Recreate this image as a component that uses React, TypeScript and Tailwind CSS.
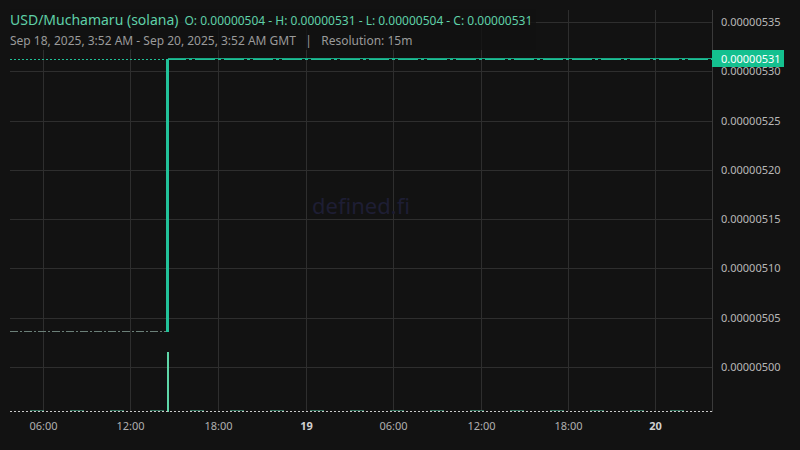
export default function App() {
  const prices = ["535", "530", "525", "520", "515", "510", "505", "500"];
  const ys = [22, 71, 121, 170, 219, 268, 318, 367];
  const xs = [43, 130, 218, 306, 393, 481, 568, 655];
  const times = ["06:00", "12:00", "18:00", "19", "06:00", "12:00", "18:00", "20"];
  return (
    <div className="relative w-[800px] h-[450px] bg-[#121212] overflow-hidden" style={{ fontFamily: "'Noto Sans', sans-serif" }}>
      <svg width="800" height="450" className="absolute inset-0">
        {ys.map((y) => (
          <line key={y} x1="10" x2="712" y1={y + 0.5} y2={y + 0.5} stroke="#2e2e2e" />
        ))}
        {xs.map((x) => (
          <line key={x} x1={x + 0.5} x2={x + 0.5} y1="10" y2="411" stroke="#2e2e2e" />
        ))}
        <line x1="712.5" x2="712.5" y1="10" y2="412" stroke="#3a3a3a" />
        <text x="361" y="214" textAnchor="middle" fill="#1e1e34" fontSize="22" fontFamily="Noto Sans, sans-serif">defined.fi</text>
        <line x1="10" x2="166" y1="59.5" y2="59.5" stroke="#1fbf95" strokeDasharray="2 2" />
        <line x1="166" x2="712" y1="59.5" y2="59.5" stroke="#1fbf95" strokeDasharray="20 3 3 3" />
        <line x1="168" x2="712" y1="58.5" y2="58.5" stroke="#17a885" />
        <line x1="10" x2="167" y1="331.5" y2="331.5" stroke="#6b7f78" strokeDasharray="8 2 2 2" />
        <rect x="166" y="59" width="3" height="273" fill="#22c29a" />
        <rect x="167" y="352" width="2" height="60" fill="#5fd6a8" />
        <line x1="10" x2="712" y1="411.5" y2="411.5" stroke="#c8c8c8" strokeDasharray="2 2" />
        <line x1="30" x2="700" y1="410.5" y2="410.5" stroke="#4fc7a0" strokeOpacity="0.5" strokeDasharray="14 26" />
        {ys.map((y, i) => (
          <text key={i} x="721" y={y + 4} fill="#b8b8b8" fontSize="11" fontFamily="Noto Sans, sans-serif">0.00000{prices[i]}</text>
        ))}
        <rect x="712" y="50" width="72" height="17" fill="#14c08f" />
        <text x="721" y="63" fill="#ffffff" fontSize="11" fontFamily="Noto Sans, sans-serif">0.00000531</text>
        {xs.map((x, i) => (
          <text key={i} x={x + 0.5} y="430" textAnchor="middle" fill={i === 3 || i === 7 ? "#d0d0d0" : "#b0b0b0"} fontWeight={i === 3 || i === 7 ? 700 : 400} fontSize="11" fontFamily="Noto Sans, sans-serif">{times[i]}</text>
        ))}
      </svg>
      <div className="absolute left-[10px] top-[9px] flex flex-col gap-[2px] bg-[#121212]/80 pr-1">
        <div className="flex items-baseline gap-[6px] text-[#5fd0a8]">
          <span className="text-[14px]">USD/Muchamaru (solana)</span>
          <span className="text-[12px]">O: 0.00000504 - H: 0.00000531 - L: 0.00000504 - C: 0.00000531</span>
        </div>
        <div className="text-[12px] text-[#9a9a9a] whitespace-pre">Sep 18, 2025, 3:52 AM - Sep 20, 2025, 3:52 AM GMT   |   Resolution: 15m</div>
      </div>
    </div>
  );
}
